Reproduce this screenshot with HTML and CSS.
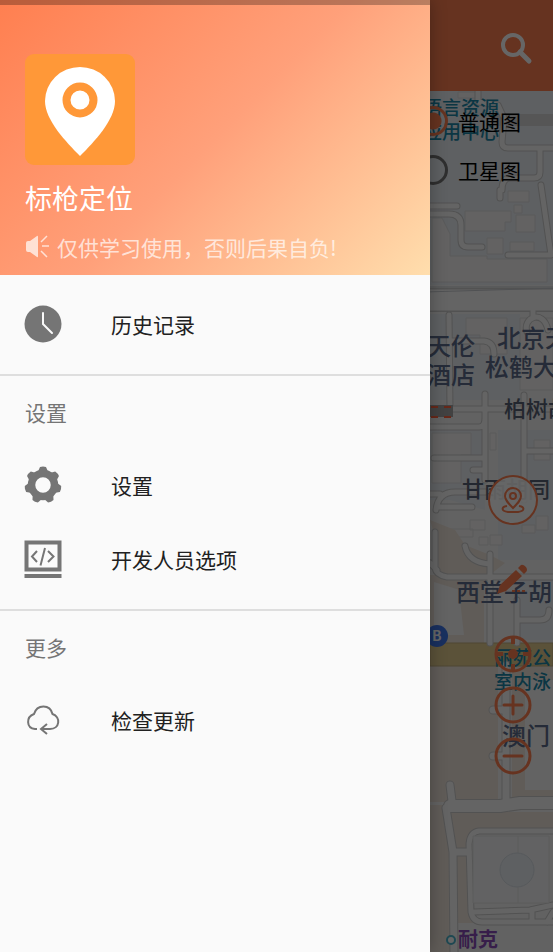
FILE: index.html
```html
<!DOCTYPE html>
<html lang="zh-CN">
<head>
  <meta charset="UTF-8">
  <meta name="viewport" content="width=device-width, initial-scale=1.0">
  <title>标枪定位</title>
  <link rel="stylesheet" href="styles.css">
</head>
<body>
  <div class="app">
    <header class="toolbar">
      <button type="button" class="icon-button" aria-label="搜索">
        <svg width="36" height="36" viewBox="0 0 36 36" fill="none" stroke="#fff">
          <circle cx="14" cy="14" r="10" stroke-width="4"/>
          <path d="M21 21L30 30" stroke-width="5" stroke-linecap="round"/>
        </svg>
      </button>
    </header>

    <main class="map">
      <!-- Fond de carte -->
      <svg class="map-canvas" viewBox="0 91 553 861" preserveAspectRatio="xMaxYMin slice">
        <rect y="91" width="553" height="861" fill="#f5f5f5"/>
        <g fill="#eaeff4">
          <path d="M430 91H553V285H430z"/>
          <path d="M430 314H520V400H430zM430 425H485V510L450 500H430zM498 430H553V560H498z"/>
          <path d="M519 575H553V640H519z"/>
        </g>
        <g fill="#f7f6f5" stroke="#e0e0e0">
          <path d="M465 211H511V222H505V231H465zM508 191H529V202H508zM514 205H522V213H514zM516 215H535V232H516zM487 238H503V254H487zM510 242H534V251H510z"/>
          <path d="M442 218L450 234V256H487V259H547V282H432V218z"/>
          <path d="M466 318H507V354H480V335H466zM458 92H478V98H458zM520 318H553V390H520z"/>
          <path d="M432 433H471V455H461V483H432zM534 440H550V460H534zM490 433H496V450H490zM443 529H473V537H443zM470 520H485V530H470zM479 537H488V545H479zM490 535H502V545H490zM522 525H535V533H522zM536 516H548V530H536z"/>
        </g>
        <g fill="#f0e6dc">
          <path d="M430 520L455 530L465 545L490 555L505 563L487 577H440L436 540z"/>
          <path d="M430 575H484V643H430z"/>
          <path d="M430 665H498V802H430zM512 665H553V802H512zM447 812H553V830H480L468 836L465 850L453 852z"/>
          <path d="M430 805H443L450 850V952H430zM456 855H467L470 915L480 923H456z"/>
        </g>
        <path d="M434 582L460 590V600L464 635H434zM525 680H553V790H525z" fill="#f7f7f7"/>
        <path d="M430 643H553V666H430z" fill="#e4cc90" stroke="#c3ae7e"/>

        <!-- Rues -->
        <g fill="none" stroke-linejoin="round" stroke-linecap="round">
          <path d="M498 120H553" stroke="#d7d7d7" stroke-width="12"/>
          <g stroke="#cccccc">
            <path stroke-width="7" d="M425 206H457M425 214H449Q461 214 461 225V240Q461 247 468 247H482M500 190V198M508 255H550M541 185L551 255M540 150V172Q540 178 534 178H510Q502 178 502 190M553 148H508Q502 148 502 142L504 118L498 105L478 102V92"/>
            <path stroke-width="24" d="M425 300H560"/>
            <path stroke-width="7" d="M449 315L450 410M450 341H484Q494 342 494 354M533 307V316M527 332C522 318 543 308 548 330M425 409H553M425 427H479Q485 427 485 418V394M485 410V480M524 395V500M434 458H485M473 470H485M524 451H553M425 494H440M435 532V568Q436 575 447 577H553M436 510Q438 492 455 492H486M438 507H472M465 546C467 556 475 563 490 564M490 554V643M517 600V643M517 620H540Q549 620 549 610M430 563L437 570"/>
            <path stroke-width="9" d="M450 785L452 801M506 665V801M493 710H503M493 756H503M446 808L453 852L454 952M453 852H468"/>
            <path stroke-width="14" d="M450 806H500L520 803H553"/>
            <path stroke-width="7" d="M560 831H479Q470 832 469 844L471 912Q473 922 482 922H553M474 912L530 910L553 905M532 912V922M553 912L547 922"/>
          </g>
          <g stroke="#fafafa">
            <path stroke-width="5" d="M425 206H457M425 214H449Q461 214 461 225V240Q461 247 468 247H482M500 190V198M508 255H550M541 185L551 255M540 150V172Q540 178 534 178H510Q502 178 502 190M553 148H508Q502 148 502 142L504 118L498 105L478 102V92"/>
            <path stroke-width="21" d="M425 300H560"/>
            <path stroke-width="5" d="M449 315L450 410M450 341H484Q494 342 494 354M533 307V316M527 332C522 318 543 308 548 330M425 409H553M425 427H479Q485 427 485 418V394M485 410V480M524 395V500M434 458H485M473 470H485M524 451H553M425 494H440M435 532V568Q436 575 447 577H553M436 510Q438 492 455 492H486M438 507H472M465 546C467 556 475 563 490 564M490 554V643M517 600V643M517 620H540Q549 620 549 610M430 563L437 570"/>
            <path stroke-width="7" d="M450 785L452 801M506 665V801M493 710H503M493 756H503M446 808L453 852L454 952M453 852H468"/>
            <path stroke-width="12" d="M450 806H500L520 803H553"/>
            <path stroke-width="5" d="M560 831H479Q470 832 469 844L471 912Q473 922 482 922H553M474 912L530 910L553 905M532 912V922M553 912L547 922"/>
          </g>
          <path d="M425 287H560M425 292L560 288" stroke="#c8cbd0" stroke-width="1"/>
        </g>
        <path d="M473 836H549V903H473zM518 836V903" fill="#f5f6f7" stroke="#e4e4e4"/>
        <circle cx="517" cy="870" r="17" fill="#ebeff4" stroke="#d8dfe6"/>
        <path d="M430 405H453V417H430z" fill="#a6a6a6"/>
        <path d="M431 407H438M444 407H451M431 417H438M444 417H451" stroke="#ff6540" stroke-width="2"/>

        <g class="place">
          <text x="427" y="355">天伦</text>
          <text x="427" y="384">酒店</text>
          <text x="497" y="347">北京天</text>
          <text x="485" y="376">松鹤大</text>
          <text x="456" y="601">西堂子胡</text>
          <text x="502" y="745">澳门</text>
        </g>
        <g class="street">
          <text x="504" y="417">柏树胡</text>
          <text x="462" y="497">甘雨胡同</text>
        </g>
        <g class="venue">
          <text x="423" y="115">语言资源</text>
          <text x="423" y="139">应用中心</text>
          <text x="494" y="665">丽苑公</text>
          <text x="494" y="689">室内泳</text>
        </g>
        <text class="shop" x="458" y="947">耐克</text>
        <circle cx="451" cy="940" r="4" fill="#fff" stroke="#4db5cc" stroke-width="2"/>
        <circle cx="437" cy="636" r="11" fill="#4078ed"/>
        <text class="stop" x="432" y="641">B</text>
      </svg>

      <div class="map-types">
        <label><input type="radio" name="maptype" checked> 普通图</label>
        <label><input type="radio" name="maptype"> 卫星图</label>
      </div>

      <div class="map-tools">
        <button type="button" class="place-button" aria-label="定位">
          <svg width="50" height="50" viewBox="0 0 50 50" fill="none" stroke="#ff7f50" stroke-width="2">
            <circle cx="25" cy="25" r="24" fill="#fff" fill-opacity=".9"/>
            <path d="M25 33C20 28 17 25 17 21A8 8 0 0 1 33 21C33 25 30 28 25 33z"/>
            <circle cx="25" cy="21" r="3"/>
            <path d="M19 31C13 32 13 36 20 37H30C37 36 37 32 31 31"/>
          </svg>
        </button>
        <button type="button" aria-label="输入坐标">
          <svg width="38" height="38" viewBox="0 0 38 38" fill="#ff7f50">
            <path d="M3 33L6 24L22 9L28 15L12 30zM24 7L27 4Q29 3 32 6Q34 9 32 11L30 13z"/>
            <path d="M18 30H32" stroke="#ff7f50" stroke-width="2" stroke-dasharray="3 2"/>
          </svg>
        </button>
        <div class="zoom-tools">
          <button type="button" aria-label="当前位置">
            <svg width="38" height="38" viewBox="0 0 38 38" fill="none" stroke="#ff7f50" stroke-width="3">
              <circle cx="19" cy="19" r="17"/>
              <circle cx="19" cy="19" r="5" fill="#ff7f50" stroke="none"/>
              <path d="M19 3V9M19 29V35M3 19H9M29 19H35" stroke-width="4"/>
            </svg>
          </button>
          <button type="button" aria-label="放大">
            <svg width="38" height="38" viewBox="0 0 38 38" fill="none" stroke="#ff7f50" stroke-width="3" stroke-linecap="round">
              <circle cx="19" cy="19" r="17"/>
              <path d="M10 19H28M19 10V28"/>
            </svg>
          </button>
          <button type="button" aria-label="缩小">
            <svg width="38" height="38" viewBox="0 0 38 38" fill="none" stroke="#ff7f50" stroke-width="3" stroke-linecap="round">
              <circle cx="19" cy="19" r="17"/>
              <path d="M10 19H28"/>
            </svg>
          </button>
        </div>
      </div>
    </main>

    <div class="scrim"></div>

    <!-- Menu latéral -->
    <aside class="drawer">
      <div class="drawer-header">
        <svg class="logo" width="110" height="111" viewBox="0 0 110 111">
          <rect width="110" height="111" rx="9" fill="#ff9838"/>
          <path d="M55 102C41 88 20 66 20 47A35 34 0 0 1 90 47C90 66 69 88 55 102z" fill="#fff"/>
          <circle cx="55" cy="46" r="13.5" fill="#fff" stroke="#ff9838" stroke-width="8"/>
        </svg>
        <h1>标枪定位</h1>
        <p class="notice">
          <svg width="24" height="24" viewBox="0 0 24 24" fill="currentColor">
            <path d="M1 8Q1 6 3 6H5L12 1Q13 0 13 2V21Q13 23 12 22L5 17H3Q1 17 1 15z"/>
            <path d="M16 7L22 1M17 11H24M16 16L22 22" stroke="currentColor" stroke-width="1.5"/>
          </svg>
          <span>仅供学习使用，否则后果自负!</span>
        </p>
      </div>

      <nav>
        <div class="group">
          <a href="#">
            <svg width="38" height="38" viewBox="0 0 38 38">
              <circle cx="19" cy="19" r="18.5" fill="#757575"/>
              <path d="M19 8V19L28 28" fill="none" stroke="#fafafa" stroke-width="2" stroke-linecap="round"/>
            </svg>
            历史记录
          </a>
        </div>
        <div class="group">
          <h2>设置</h2>
          <a href="#">
            <svg width="38" height="38" viewBox="0 0 38 38" fill="none" stroke="#757575">
              <circle cx="19" cy="19" r="11.5" stroke-width="7.5"/>
              <g fill="#757575" stroke="none">
                <path id="tooth" d="M13 8L16 1Q19 0 22 1L25 8z"/>
                <use href="#tooth" transform="rotate(51.43 19 19)"/>
                <use href="#tooth" transform="rotate(102.86 19 19)"/>
                <use href="#tooth" transform="rotate(154.29 19 19)"/>
                <use href="#tooth" transform="rotate(205.71 19 19)"/>
                <use href="#tooth" transform="rotate(257.14 19 19)"/>
                <use href="#tooth" transform="rotate(308.57 19 19)"/>
              </g>
            </svg>
            设置
          </a>
          <a href="#">
            <svg width="38" height="38" viewBox="0 0 38 38" fill="none" stroke="#757575">
              <path d="M2.5 2.5H35.5V29.5H2.5z" stroke-width="4"/>
              <path d="M.5 36H37.5" stroke-width="4"/>
              <path d="M13 11L8 16.5L13 22M24 11L29.5 16.5L24 22M21 8L16.5 25.5" stroke-width="2"/>
            </svg>
            开发人员选项
          </a>
        </div>
        <div class="group">
          <h2>更多</h2>
          <a href="#">
            <svg width="38" height="38" viewBox="0 0 38 38" fill="none" stroke="#757575" stroke-width="2">
              <path d="M13 28H11C2 27 2 16 10 13C13 3 26 3 28.5 13C37 16 36 28 26 28H17M23 23L17 28L23 33"/>
            </svg>
            检查更新
          </a>
        </div>
      </nav>
    </aside>
  </div>
</body>
</html>
```
FILE: styles.css
```css
* {
  box-sizing: border-box;
}

body {
  margin: 0;
  font-family: "Noto Sans CJK SC", sans-serif;
  color: #212121;
}

.app {
  position: relative;
  display: flex;
  flex-direction: column;
  min-height: 100vh;
  overflow: hidden;
}

button {
  padding: 0;
  border: none;
  background: none;
  cursor: pointer;
}

svg {
  display: block;
  flex: none;
}

.toolbar {
  display: flex;
  justify-content: flex-end;
  align-items: flex-end;
  height: 91px;
  padding: 24px 18px;
  background-color: #ff7f50;
}

/* Carte */
.map {
  position: relative;
  flex: 1;
  display: flex;
  flex-direction: column;
  align-items: flex-end;
  min-height: 861px;
}

.map-canvas {
  position: absolute;
  inset: 0;
  width: 100%;
  height: 100%;
}

.place {
  font-size: 24px;
  font-weight: 500;
  fill: #5d6d8c;
}

.street {
  font-size: 22px;
  font-weight: 500;
  fill: #596375;
}

.venue {
  font-size: 19px;
  font-weight: 500;
  fill: #1d88a8;
}

.shop {
  font-size: 20px;
  font-weight: 700;
  fill: #8a4cb8;
}

.stop {
  font-size: 14px;
  font-weight: 700;
  fill: #fff;
}

.map-types {
  position: relative;
  display: flex;
  flex-direction: column;
  gap: 17px;
  padding: 14px 32px 0 0;
}

.map-types label {
  display: flex;
  align-items: center;
  gap: 10px;
  height: 32px;
  font-size: 21px;
  color: #000;
}

.map-types input {
  appearance: none;
  width: 30px;
  height: 30px;
  margin: 0;
  border: 3px solid #757575;
  border-radius: 50%;
}

.map-types input:checked {
  border-color: #ff7f50;
  background: radial-gradient(#ff7f50 8px, transparent 9px);
}

.map-tools {
  position: relative;
  display: flex;
  flex-direction: column;
  align-items: center;
  margin-top: 289px;
  padding-right: 15px;
  gap: 36px;
}

.zoom-tools {
  display: flex;
  flex-direction: column;
  gap: 13px;
}

.scrim {
  position: absolute;
  inset: 0;
  background-color: rgba(0, 0, 0, 0.6);
}

/* Menu latéral */
.drawer {
  position: absolute;
  top: 0;
  bottom: 0;
  left: 0;
  width: calc(100% - 123px);
  background-color: #fafafa;
  box-shadow: 0 0 16px rgba(0, 0, 0, 0.3);
}

.drawer-header {
  height: 275px;
  padding: 49px 25px 0;
  border-top: 5px solid rgba(0, 0, 0, 0.27);
  background: linear-gradient(135deg, #ff7f50, #ffa07a 50%, #ffdead) border-box;
  color: #fff;
}

.drawer-header h1 {
  margin: 15px 0;
  font-size: 27px;
  font-weight: 400;
  line-height: 36px;
}

.notice {
  display: flex;
  align-items: center;
  gap: 8px;
  margin: 0;
  font-size: 21px;
  line-height: 32px;
  color: rgba(255, 255, 255, 0.7);
}

.group {
  padding: 12px 0 13px;
  border-bottom: 2px solid #dedede;
}

.group:last-child {
  border-bottom: none;
}

.group h2 {
  margin: 0 0 12px;
  padding: 0 25px;
  font-size: 21px;
  font-weight: 400;
  line-height: 48px;
  color: #757575;
}

.group a {
  display: flex;
  align-items: center;
  gap: 49px;
  height: 74px;
  padding: 0 24px;
  font-size: 21px;
  color: #212121;
  text-decoration: none;
}
```
